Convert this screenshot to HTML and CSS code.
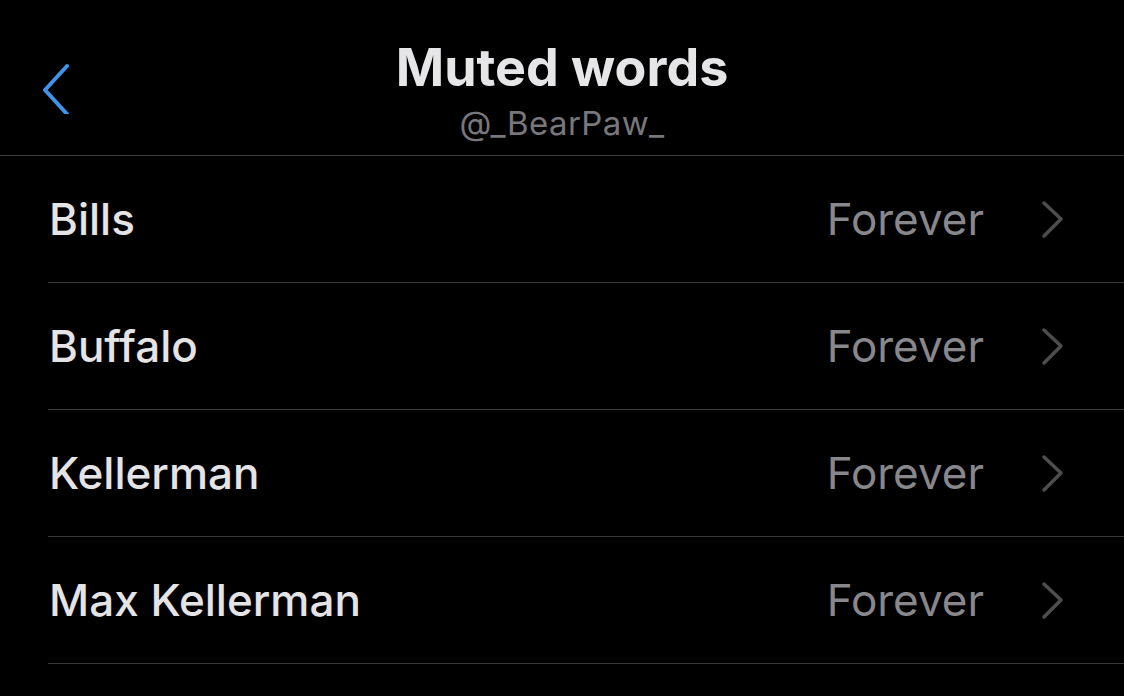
FILE: index.html
```html
<!DOCTYPE html>
<html lang="en">
<head>
<meta charset="utf-8">
<title>Muted words</title>
<link rel="stylesheet" href="styles.css">
</head>
<body>
<div class="screen">
  <header class="nav">
    <button class="back" aria-label="Back">
      <svg width="40" height="60" viewBox="0 0 40 60"><path d="M25 12 L3 36 L25 60" fill="none" stroke="#3d95e9" stroke-width="4" stroke-linecap="round" stroke-linejoin="round"/></svg>
    </button>
    <div class="titles">
      <h1 class="title">Muted words</h1>
      <div class="subtitle">@_BearPaw_</div>
    </div>
  </header>
  <ul class="list">
    <li class="row"><span class="word">Bills</span><span class="meta"><span class="dur">Forever</span><svg class="chev" width="24" height="40" viewBox="0 0 24 40"><path d="M4 4 L21 20 L4 37" fill="none" stroke="#4d4d50" stroke-width="3.5" stroke-linecap="round" stroke-linejoin="round"/></svg></span></li>
    <li class="row"><span class="word">Buffalo</span><span class="meta"><span class="dur">Forever</span><svg class="chev" width="24" height="40" viewBox="0 0 24 40"><path d="M4 4 L21 20 L4 37" fill="none" stroke="#4d4d50" stroke-width="3.5" stroke-linecap="round" stroke-linejoin="round"/></svg></span></li>
    <li class="row"><span class="word">Kellerman</span><span class="meta"><span class="dur">Forever</span><svg class="chev" width="24" height="40" viewBox="0 0 24 40"><path d="M4 4 L21 20 L4 37" fill="none" stroke="#4d4d50" stroke-width="3.5" stroke-linecap="round" stroke-linejoin="round"/></svg></span></li>
    <li class="row"><span class="word">Max Kellerman</span><span class="meta"><span class="dur">Forever</span><svg class="chev" width="24" height="40" viewBox="0 0 24 40"><path d="M4 4 L21 20 L4 37" fill="none" stroke="#4d4d50" stroke-width="3.5" stroke-linecap="round" stroke-linejoin="round"/></svg></span></li>
  </ul>
</div>
</body>
</html>
```
FILE: styles.css
```css
html, body {
  margin: 0;
  padding: 0;
  background: #000;
}
body {
  font-family: Inter, "Liberation Sans", sans-serif;
  color: #e4e4e6;
  width: 1124px;
  height: 696px;
  overflow: hidden;
}
.screen {
  display: flex;
  flex-direction: column;
}
.nav {
  position: relative;
  height: 155px;
  border-bottom: 1px solid #3a3a3c;
  display: flex;
  justify-content: center;
}
.back {
  position: absolute;
  left: 42px;
  top: 54px;
  padding: 0;
  border: 0;
  background: none;
  display: flex;
}
.titles {
  display: flex;
  flex-direction: column;
  align-items: center;
  padding-top: 38px;
}
.title {
  margin: 0;
  font-size: 52px;
  font-weight: 700;
  line-height: 60px;
  color: #e6e6e8;
  letter-spacing: 0;
}
.subtitle {
  font-size: 33px;
  line-height: 40px;
  letter-spacing: 0.4px;
  color: #77777c;
  margin-top: 5px;
}
.list {
  list-style: none;
  margin: 0 0 0 48px;
  padding: 0;
}
.row {
  height: 126px;
  border-bottom: 1px solid #3a3a3c;
  display: flex;
  align-items: center;
  justify-content: space-between;
  padding-left: 1px;
  padding-right: 60px;
}
.word {
  font-size: 44px;
  font-weight: 500;
  color: #e4e4e6;
}
.meta {
  display: flex;
  align-items: center;
  gap: 56px;
}
.dur {
  font-size: 44px;
  color: #87878c;
}
.chev {
  display: block;
}
```
